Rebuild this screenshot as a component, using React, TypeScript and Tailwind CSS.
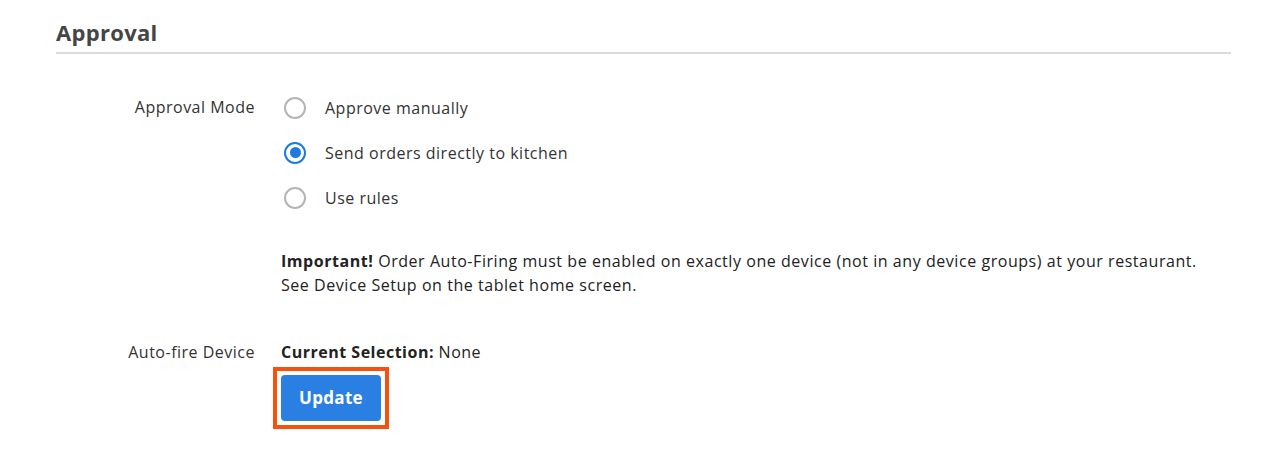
import { useState } from "react";

const opcoes = [
  { id: "manual", label: "Approve manually" },
  { id: "direct", label: "Send orders directly to kitchen" },
  { id: "rules", label: "Use rules" },
];

function App() {
  const [modo, setModo] = useState<string>("direct");

  return (
    <main
      className="min-h-screen bg-white text-[#333333] pl-[56px] pr-[34px] pt-[16px]"
      style={{ fontFamily: "'Open Sans', 'Liberation Sans', sans-serif" }}
    >
      {/* Cabeçalho */}
      <h2 className="text-[22px] leading-[32px] font-bold tracking-[0.3px] text-[#454545] pb-[4px] border-b-2 border-[#dadade]">
        Approval
      </h2>

      <section className="mt-[31px] text-[16px] tracking-[0.5px]">
        {/* Modo de aprovação */}
        <div className="flex">
          <div className="w-[199px] shrink-0 text-right leading-[45px]">Approval Mode</div>
          <div className="ml-[26px] flex flex-col">
            {opcoes.map((op) => (
              <label
                key={op.id}
                className="flex items-center h-[45px] leading-[24px] cursor-pointer"
                onClick={() => setModo(op.id)}
              >
                <span
                  className={
                    modo === op.id
                      ? "ml-[3px] w-[22px] h-[22px] rounded-full border-2 border-[#1f7ae0] flex items-center justify-center"
                      : "ml-[3px] w-[22px] h-[22px] rounded-full border-2 border-[#b5b5b5] flex items-center justify-center"
                  }
                >
                  {modo === op.id && <span className="w-[11px] h-[11px] rounded-full bg-[#1f7ae0]" />}
                </span>
                <span className="ml-[19px]">{op.label}</span>
              </label>
            ))}
          </div>
        </div>

        {/* Aviso */}
        <div className="flex mt-[29px]">
          <div className="w-[199px] shrink-0" />
          <p className="ml-[26px] tracking-[0.55px] leading-[24px] text-[#222]">
            <strong className="font-bold">Important!</strong> Order Auto-Firing must be enabled on exactly one
            device (not in any device groups) at your restaurant.
            <br />
            See Device Setup on the tablet home screen.
          </p>
        </div>

        {/* Dispositivo */}
        <div className="flex mt-[43px]">
          <div className="w-[199px] shrink-0 text-right leading-[24px]">Auto-fire Device</div>
          <div className="ml-[26px] flex flex-col items-start">
            <p className="leading-[24px] text-[#222]">
              <strong className="font-bold">Current Selection:</strong> None
            </p>
            <div className="mt-[3px] ml-[-8px] border-4 border-[#f6520f] p-[4px]">
              <button
                type="button"
                className="w-[100px] h-[46px] rounded-[4px] bg-[#2a80e2] text-white font-bold text-[17px] tracking-[0.3px]"
              >
                Update
              </button>
            </div>
          </div>
        </div>
      </section>
    </main>
  );
}

export default App;
